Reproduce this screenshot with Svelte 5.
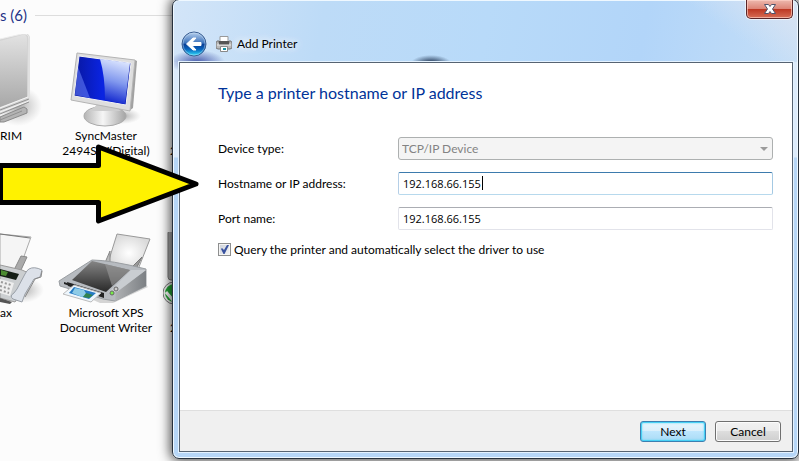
<script>
  let device = $state('TCP/IP Device');
  let host = $state('192.168.66.155');
  let port = $state('192.168.66.155');
  let query = $state(true);
</script>

<div class="desktop">
  <main class="folder">
    <div class="group"><h2>s (6)</h2><span class="rule"></span></div>
    <div class="row">
      <div class="item edge">
        <svg class="pic" width="49" height="94" viewBox="0 0 49 94" aria-hidden="true">
          <defs>
            <linearGradient id="drive" x1="0" y1="0" x2="0" y2="1"><stop offset="0" stop-color="#e2e2e2" /><stop offset="1" stop-color="#a8a8a8" /></linearGradient>
            <radialGradient id="shade"><stop offset="0" stop-color="#555" stop-opacity=".5" /><stop offset="1" stop-color="#888" stop-opacity="0" /></radialGradient>
          </defs>
          <ellipse cx="18" cy="72" rx="24" ry="20" fill="url(#shade)" />
          <path d="M0 83l24-10 3 2v4L4 88H0z" fill="#b4b4b4" stroke="#8a8a8a" />
          <path d="M0 5L22 0q8-2 8 5v62L0 80z" fill="#d4d4d4" />
          <path d="M0 7l22-6q5-1 5 4v58L0 73z" fill="url(#drive)" />
          <path d="M0 5L22 0q7-1 7 5v62" fill="none" stroke="#ececec" />
          <path d="M0 74l28-11M0 78l29-11" fill="none" stroke="#f5f5f5" />
          <path d="M0 76l29-11M0 80l29-12M0 86l22-9" fill="none" stroke="#909090" />
        </svg>
        <span>RIM</span>
      </div>
      <div class="item">
        <svg class="pic" width="72" height="94" viewBox="0 0 72 94" aria-hidden="true">
          <defs>
            <linearGradient id="screen"><stop offset="0" stop-color="#0817a0" /><stop offset=".5" stop-color="#0a24e2" /><stop offset="1" stop-color="#0717a8" /></linearGradient>
            <linearGradient id="glare" x1=".6" y1="0" x2=".4" y2="1"><stop offset="0" stop-color="#dfe8ff" /><stop offset=".5" stop-color="#8198ee" /><stop offset="1" stop-color="#0b20cc" /></linearGradient>
            <linearGradient id="foot"><stop offset="0" stop-color="#b4b4b4" /><stop offset=".45" stop-color="#f6f6f6" /><stop offset="1" stop-color="#a4a4a4" /></linearGradient>
          </defs>
          <ellipse cx="52" cy="82" rx="19" ry="8" fill="url(#shade)" />
          <ellipse cx="35" cy="82" rx="21" ry="10" fill="url(#foot)" stroke="#aaa" />
          <path d="M27 70h18q2 5 6 7H18q7-3 9-7z" fill="#cdcdcd" />
          <path d="M65 26l2 1-4 47-4 3z" fill="#a2a2a2" />
          <path d="M7 19l58 7-5 51L1 66z" fill="#dedede" stroke="#b4b4b4" />
          <path d="M9 22l52 7-5 42L4 62z" fill="url(#screen)" stroke="#f3f3f3" />
          <path d="M30 25l30 4-5 41-20-4q0-24-5-41z" fill="url(#glare)" />
          <path d="M8 33l12 31-15-3z" fill="#718cff" opacity=".5" />
        </svg>
        <span>SyncMaster<br />2494SW(Digital)</span>
      </div>
      <div class="item far"><div class="pic blank"></div><span>&nbsp;<br />2</span></div>
    </div>
    <div class="row">
      <div class="item edge">
        <svg class="pic" width="49" height="73" viewBox="0 0 49 73" aria-hidden="true">
          <ellipse cx="22" cy="58" rx="22" ry="13" fill="url(#shade)" />
          <path d="M0 2l31 3-13 36-18-7z" fill="#f5f5f5" stroke="#aaa" />
          <path d="M0 2l30 4" stroke="#777" />
          <path d="M21 24l-7 14h7l6-13z" fill="#aaa" stroke="#888" />
          <path d="M0 33l22 5 11 5-18 27-15-4z" fill="#cbced0" stroke="#999" />
          <path d="M0 37l19 5-3 6-16-4z" fill="#151e15" /><path d="M1 38l7 2-2 4-5-1z" fill="#4b8b31" />
          <path d="M0 47l14 4-4 13-10-3z" fill="#eee" />
          <path d="M1 50l10 3M0 54l10 3M0 58l9 3" stroke="#999" stroke-width="2" stroke-dasharray="2 2" />
          <path d="M29 37q5-3 13 1l-2 7-6 2-9 15-3 8-9-3q-4-3 1-6l3-4 8-15q2-4 4-5z" fill="#dce1e9" stroke="#9aa0a8" />
          <path d="M42 39l-1 6-6 2-10 18" fill="none" stroke="#888" />
          <path d="M0 66l12 4-2 2-10-2z" fill="#555" />
        </svg>
        <span>ax</span>
      </div>
      <div class="item">
        <svg class="pic" width="96" height="73" viewBox="0 0 96 73" aria-hidden="true">
          <defs>
            <linearGradient id="lid" x1="0" y1="0" x2="0" y2="1"><stop offset="0" stop-color="#858585" /><stop offset="1" stop-color="#292929" /></linearGradient>
            <linearGradient id="side"><stop offset="0" stop-color="#b0b2b4" /><stop offset="1" stop-color="#7c8084" /></linearGradient>
            <radialGradient id="sheet"><stop offset="0" stop-color="#fff" /><stop offset="1" stop-color="#dadada" /></radialGradient>
          </defs>
          <path d="M2 53l40 18h13l35-16-8-7z" fill="#999" opacity=".4" />
          <path d="M59 2l33 5-13 33-29-9z" fill="url(#sheet)" stroke="#999" />
          <path d="M52 19l-6 14h6z" fill="#bbb" stroke="#888" /><path d="M84 25l-7 14-5-2z" fill="#999" stroke="#777" />
          <path d="M1 49L34 28q18 0 54 9v17L57 69l-12-2L2 54z" fill="#b7bbc0" stroke="#9a9ea2" />
          <path d="M58 60l30-22v16L57 69z" fill="url(#side)" />
          <path d="M34 29l38 9-24 22-34-12z" fill="url(#lid)" />
          <path d="M47 32l25 6-18 16z" fill="#999" opacity=".6" />
          <path d="M73 38l15 0-29 22-9 1z" fill="#c9cdd1" />
          <path d="M9 50l37 11v5L10 54z" fill="#222" />
          <path d="M16 53l27 8-10 9L5 62z" fill="#eef6fc" stroke="#bbb" />
          <path d="M16 55l22 6-7 6-20-6z" fill="#257ac5" /><path d="M17 56l9 2 3 5-5 2-10-4z" fill="#8ecbe6" /><path d="M28 61l7 2-4 3-6-1z" fill="#32834f" />
          <path d="M6 50l6 2v2l-6-2z" fill="#222" />
          <circle cx="54" cy="61" r="2" fill="#76ed45" stroke="#666" /><circle cx="58" cy="57" r="2" fill="#ccc" stroke="#666" />
        </svg>
        <span>Microsoft XPS<br />Document Writer</span>
      </div>
      <div class="item far">
        <svg class="pic" width="20" height="73" viewBox="0 0 20 73" aria-hidden="true">
          <rect x="5" y="-2" width="14" height="50" rx="3" fill="#aaa" stroke="#777" />
          <circle cx="11" cy="61" r="11" fill="#eee" stroke="#777" /><circle cx="11" cy="61" r="9" fill="#26a637" />
          <path d="M3 60l6 7 8-12" fill="none" stroke="#fff" stroke-width="3" />
        </svg>
        <span>&nbsp;<br />2</span>
      </div>
    </div>
  </main>

  <section class="window" aria-label="Add Printer">
    <header>
      <button class="back" aria-label="Back">
        <svg width="26" height="26" viewBox="0 0 26 26" aria-hidden="true">
          <defs><linearGradient id="orb" x1="0" y1="0" x2="0" y2="1"><stop offset="0" stop-color="#b9d1ed" /><stop offset=".47" stop-color="#3971bb" /><stop offset=".5" stop-color="#073c94" /><stop offset=".72" stop-color="#0864bd" /><stop offset="1" stop-color="#35e4ff" /></linearGradient></defs>
          <circle cx="13" cy="13" r="12" fill="url(#orb)" stroke="#395d91" />
          <circle cx="13" cy="13" r="11" fill="none" stroke="#d3e9fb" stroke-opacity=".4" />
          <path d="M5.500 13l6.500-6h3l-4 4.500h9v3h-9l4 4.500h-3z" fill="#fff" stroke="#fff" stroke-linejoin="round" />
        </svg>
      </button>
      <svg width="16" height="16" viewBox="0 0 16 16" aria-hidden="true">
        <path d="M4 .5h8v6H4z" fill="#fff" stroke="#999" />
        <path d="M1 5h2v2h10V5h2l1 2v5l-2 1H2l-2-1V7z" fill="#bbb" stroke="#777" />
        <path d="M3 5h10v4H3z" fill="#555" /><path d="M1 9h14" stroke="#eee" />
        <path d="M4.500 10.500h7v5h-7z" fill="#fff" stroke="#888" /><path d="M7 12h3v2H7z" fill="#1694a5" />
      </svg>
      <h1>Add Printer</h1>
      <button class="close" aria-label="Close">
        <svg width="12" height="10" viewBox="0 0 12 10" aria-hidden="true"><path d="M.5.5h4L6 2.500 7.500.5h4L8.500 5l3 4.500h-4L6 7.500 4.500 9.500h-4L3.500 5z" fill="#fff" stroke="#50536b" /></svg>
      </button>
    </header>
    <form class="client" onsubmit={(e) => e.preventDefault()}>
      <div class="page">
        <h2>Type a printer hostname or IP address</h2>
        <div class="fields">
          <label for="device">Device type:</label>
          <div class="control">
            <select id="device" bind:value={device} disabled><option>TCP/IP Device</option></select>
            <svg class="chevron" width="8" height="4" viewBox="0 0 8 4" aria-hidden="true"><path d="M0 0h8L4 4z" fill="#9b9b9b" /></svg>
          </div>
          <label for="host">Hostname or IP address:</label>
          <div class="control"><input id="host" class="active" type="text" bind:value={host} /><span class="caret"></span></div>
          <label for="port">Port name:</label>
          <div class="control"><input id="port" type="text" bind:value={port} /></div>
        </div>
        <div class="check">
          <span class="tick">
            <input id="query" type="checkbox" bind:checked={query} />
            {#if query}<svg width="13" height="13" viewBox="0 0 13 13" aria-hidden="true"><path d="M3 6l1-1 2 2 3-5h2L6.500 11h-1z" fill="#39529f" /></svg>{/if}
          </span>
          <label for="query">Query the printer and automatically select the driver to use</label>
        </div>
      </div>
      <footer>
        <button class="push default" type="submit">Next</button>
        <button class="push" type="button">Cancel</button>
      </footer>
    </form>
  </section>

  <svg class="arrow" width="200" height="84" viewBox="0 0 200 84" aria-hidden="true">
    <path d="M.5 23.500H98.500V5L196 42 98.500 79V60.500H.5z" fill="#fff200" stroke="#000" stroke-width="5" stroke-linejoin="round" />
  </svg>
</div>

<style>
  :global(body) { margin: 0; }
  .desktop {
    position: relative; min-height: 100vh; overflow: hidden; background: #fcfcfc;
    font: 12px/15px Lato, "Open Sans", sans-serif; color: #000;
  }
  h1, h2 { margin: 0; font-weight: 400; }
  button, input, select { font: inherit; color: inherit; box-sizing: border-box; margin: 0; }
  .folder { padding-top: 3px; }
  .group { display: flex; align-items: center; gap: 8px; height: 24px; }
  .group h2 { font-size: 15px; line-height: 24px; color: #1e3287; }
  .rule { flex: 1; height: 1px; background: #ddd; }
  .row { display: grid; grid-template-columns: 49px 114px 80px; padding-top: 7px; }
  .row + .row { padding-top: 74px; }
  .item { display: flex; flex-direction: column; align-items: center; text-align: center; }
  .item.edge, .item.far { align-items: flex-start; text-align: left; }
  .item span { white-space: nowrap; }
  .far span { padding-left: 7px; }
  .pic { display: block; height: 94px; }
  .row + .row .pic { height: 73px; }

  .window {
    position: absolute; left: 172px; right: 0; top: -1px; bottom: 2px; box-sizing: border-box;
    display: flex; flex-direction: column; padding: 0 5px 6px 6px;
    border: 1px solid #27313d; border-radius: 7px;
    background:
      radial-gradient(ellipse 28px 12px at 24px 62px, rgba(50, 70, 160, .85), transparent),
      radial-gradient(ellipse 20px 8px at 258px 63px, rgba(20, 40, 70, 1), transparent),
      linear-gradient(35deg, transparent 84%, rgba(220, 228, 242, .7) 95%) top / 100% 62px no-repeat,
      linear-gradient(100deg, #d3e5f8 0, #bddbf7 24%, #b8daf9 50%, #b2d5f9 75%, #c4def7) top / 100% 62px no-repeat,
      linear-gradient(#dcebfb 0, #dcebfb 157px, #b6d6f7 158px);
    box-shadow: inset 0 0 0 1px #eff8ff, 0 0 12px 2px rgba(0, 0, 0, .7);
  }
  header { display: flex; align-items: center; height: 62px; box-sizing: border-box; padding: 25px 0 0 2px; gap: 9px; }
  header h1 { margin-left: -4px; font-size: 12px; line-height: 16px; text-shadow: 0 0 8px #fff, 0 0 8px #fff; }
  header button { padding: 0; border: 0; background: none; }
  header button svg { display: block; }
  header .close {
    align-self: flex-start; margin: -25px 0 0 auto; width: 47px; height: 19px; display: grid; place-items: center;
    border: 1px solid #5a2629; border-top: 0; border-radius: 0 0 5px 5px;
    background: linear-gradient(#edb9ae 0, #dd8577 48%, #bd3823 52%, #d76d55 100%);
    box-shadow: inset 0 0 0 1px rgba(255, 210, 200, .65), 0 0 0 1px rgba(255, 255, 255, .6);
  }
  .client {
    flex: 1; min-height: 0; display: flex; flex-direction: column; border: 1px solid #566372; background: #fff;
    box-shadow: 0 0 0 1px #e4f2ff;
  }
  .page { flex: 1; padding: 18px 19px 0 38px; }
  .page h2 { font-size: 16px; line-height: 24px; color: #003399; }
  .fields { display: grid; grid-template-columns: 180px 1fr; row-gap: 12px; padding-top: 32px; align-items: center; }
  .control { position: relative; height: 23px; }
  .control input, .control select {
    display: block; width: 100%; height: 23px; padding: 0 4px; appearance: none; outline: 0;
    border: 1px solid #e2e3ea; border-top-color: #abadb3; border-radius: 2px; background: #fff; opacity: 1;
  }
  .control input { font-family: "Open Sans", sans-serif; font-size: 11px; }
  .control select { padding: 0 3px; border-color: #adb0b0; background: #f4f4f4; color: #838383; border-radius: 3px; }
  .control .active { border-color: #3d7bad #a4c9e3 #b7d9ed #b5cfe7; }
  .chevron { position: absolute; right: 5px; top: 10px; }
  .caret { position: absolute; left: 84px; top: 4px; width: 1px; height: 14px; background: #000; }
  .check { display: flex; align-items: center; gap: 3px; padding-top: 12px; }
  .tick { position: relative; width: 13px; height: 13px; }
  .tick input { display: block; width: 13px; height: 13px; appearance: none; border: 1px solid #8e8f8f; background: linear-gradient(135deg, #cbd0d8, #f6f6f6); box-shadow: inset 0 0 0 1px #f4f4f4; }
  .tick svg { position: absolute; inset: 0; pointer-events: none; }
  footer { display: flex; justify-content: flex-end; align-items: center; gap: 9px; height: 40px; padding-right: 11px; border-top: 1px solid #dfdfdf; background: #f0f0f0; }
  .push { width: 66px; height: 21px; padding: 0; border: 1px solid #707070; border-radius: 3px; background: linear-gradient(#f2f2f2 0, #ebebeb 49%, #ddd 50%, #cfcfcf); box-shadow: inset 0 0 0 1px #fcfcfc; }
  .default { border-color: #3c7fb1; background: linear-gradient(#e8f5fc 0, #d9effb 49%, #bee6fd 50%, #a9dbf5); box-shadow: inset 0 0 0 1px #48d1f5, inset 0 0 2px 1px #5ed8f8; }
  .arrow { position: absolute; left: 0; top: 142px; pointer-events: none; }
</style>
